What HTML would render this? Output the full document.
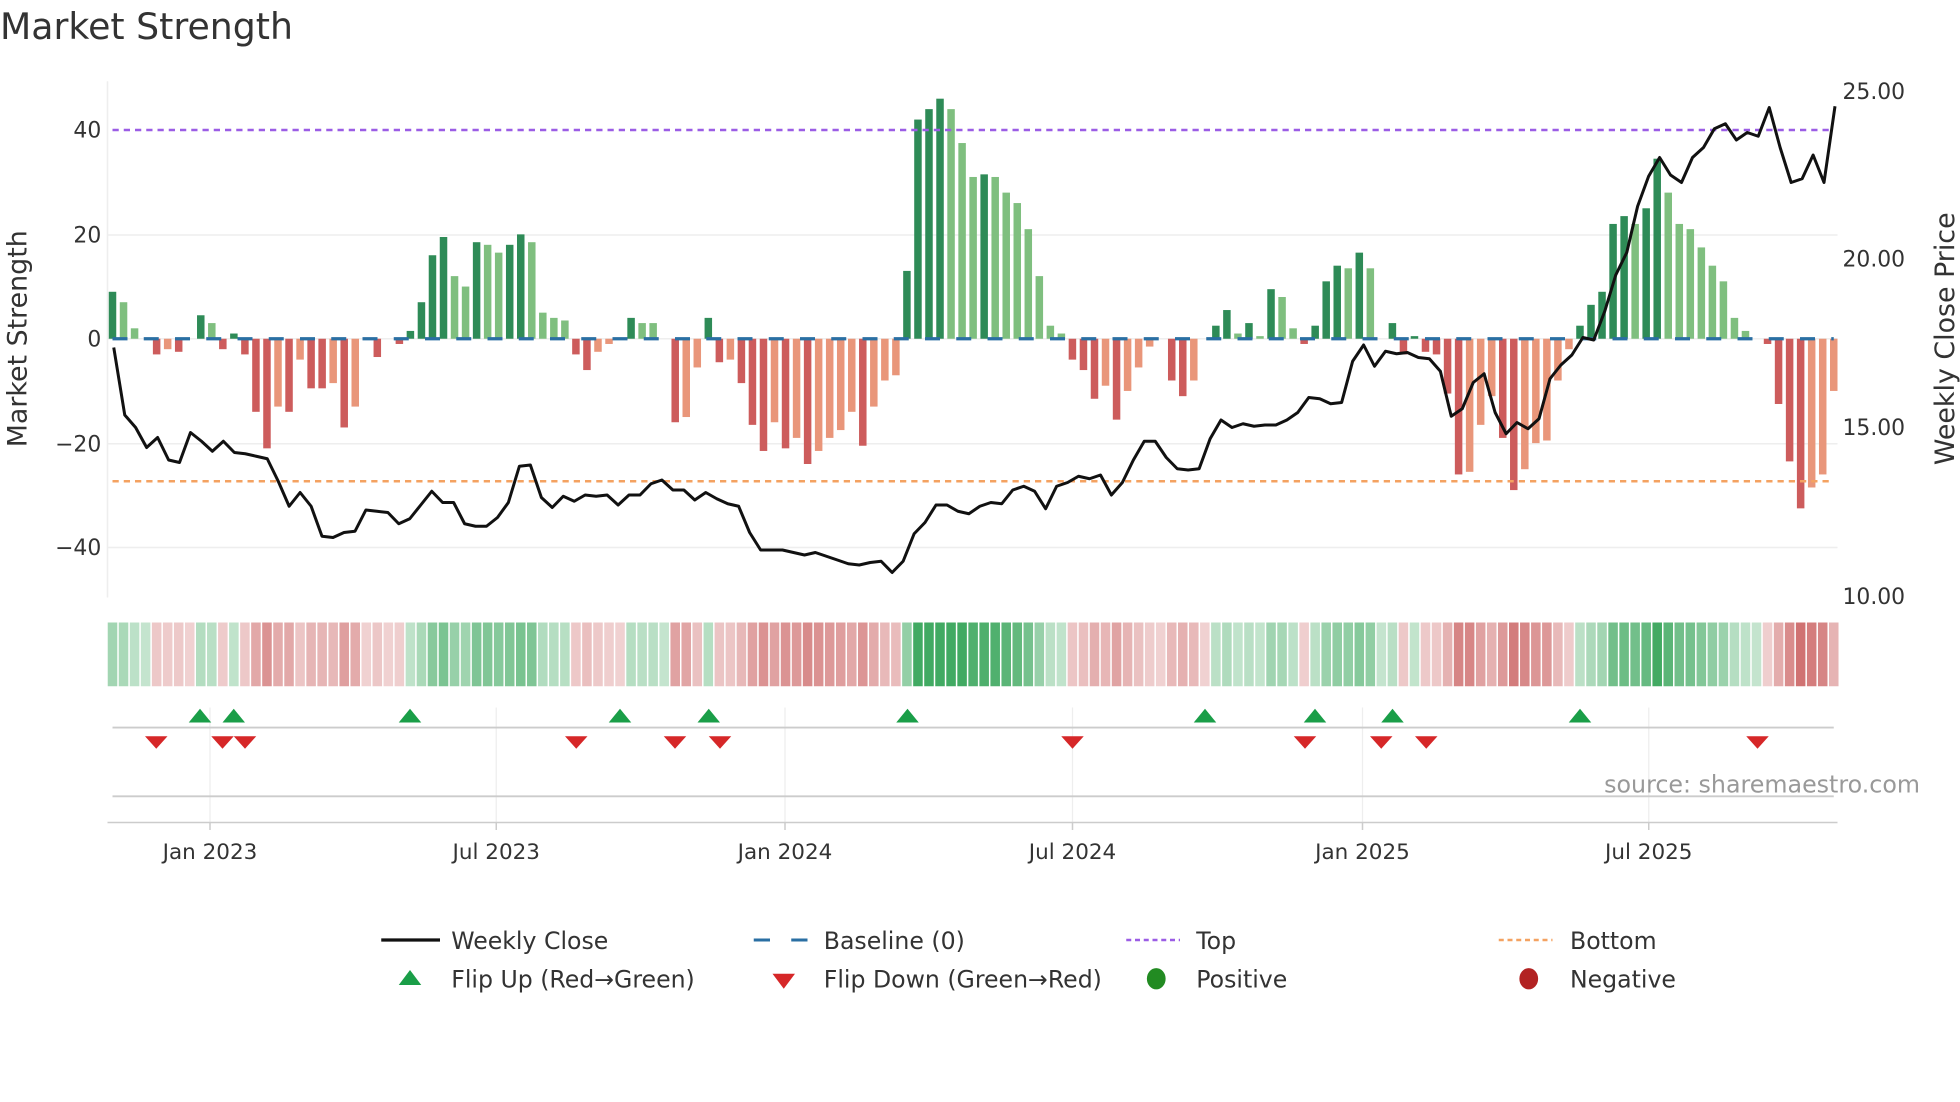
<!DOCTYPE html>
<html><head><meta charset="utf-8"><style>
html,body{margin:0;padding:0;background:#fff;}
svg{display:block;font-family:"DejaVu Sans","Liberation Sans",sans-serif;}
</style></head><body>
<svg id="s" width="1960" height="1102" viewBox="0 0 1568 881.6" xmlns="http://www.w3.org/2000/svg">
<rect width="1568" height="882" fill="#fff"/>
<text x="0" y="31" font-size="29" fill="#333">Market Strength</text>
<g stroke="#eeeeee" stroke-width="1.2">
<line x1="86" y1="188" x2="1470" y2="188"/>
<line x1="86" y1="355" x2="1470" y2="355"/>
<line x1="86" y1="438" x2="1470" y2="438"/>
<line x1="86" y1="271" x2="1470" y2="271"/>
<line x1="86" y1="65" x2="86" y2="478"/>
</g>
<g font-size="17.5" fill="#333" text-anchor="end">
<text x="81" y="110">40</text><text x="81" y="194">20</text><text x="81" y="277">0</text>
<text x="81" y="361">−20</text><text x="81" y="444">−40</text>
</g>
<g font-size="17.5" fill="#333">
<text x="1474" y="79">25.00</text><text x="1474" y="213">20.00</text>
<text x="1474" y="348">15.00</text><text x="1474" y="483">10.00</text>
</g>
<text transform="translate(21,271) rotate(-90)" font-size="21.5" fill="#333" text-anchor="middle">Market Strength</text>
<text transform="translate(1563,271) rotate(-90)" font-size="21.5" fill="#333" text-anchor="middle">Weekly Close Price</text>
<g id="bars"></g>
<line x1="90" y1="271" x2="1467" y2="271" stroke="#2a6fa3" stroke-width="2.6" stroke-dasharray="12 13"/>
<line x1="90" y1="104" x2="1467" y2="104" stroke="#9b5de5" stroke-width="2" stroke-dasharray="5 4"/>
<line x1="90" y1="385" x2="1467" y2="385" stroke="#f4a261" stroke-width="2" stroke-dasharray="5 4"/>
<polyline id="price" fill="none" stroke="#111" stroke-width="2.4" stroke-linejoin="round"/>
<g id="strip"></g>
<g stroke="#eee" stroke-width="1">
<line x1="168" y1="566" x2="168" y2="660"/><line x1="397" y1="566" x2="397" y2="660"/>
<line x1="628" y1="566" x2="628" y2="660"/><line x1="858" y1="566" x2="858" y2="660"/>
<line x1="1090" y1="566" x2="1090" y2="660"/><line x1="1319" y1="566" x2="1319" y2="660"/>
</g>
<line x1="90" y1="582" x2="1467" y2="582" stroke="#ccc" stroke-width="1.5"/>
<line x1="90" y1="637" x2="1467" y2="637" stroke="#ccc" stroke-width="1.5"/>
<g id="marks"></g>
<text x="1536" y="634" font-size="19" fill="#999" text-anchor="end">source: sharemaestro.com</text>
<line x1="86" y1="658" x2="1470" y2="658" stroke="#ccc" stroke-width="1.2"/>
<g stroke="#ccc" stroke-width="1.2">
<line x1="168" y1="658" x2="168" y2="664"/><line x1="397" y1="658" x2="397" y2="664"/>
<line x1="628" y1="658" x2="628" y2="664"/><line x1="858" y1="658" x2="858" y2="664"/>
<line x1="1090" y1="658" x2="1090" y2="664"/><line x1="1319" y1="658" x2="1319" y2="664"/>
</g>
<g font-size="17.2" fill="#333" text-anchor="middle">
<text x="168" y="687">Jan 2023</text><text x="397" y="687">Jul 2023</text>
<text x="628" y="687">Jan 2024</text><text x="858" y="687">Jul 2024</text>
<text x="1090" y="687">Jan 2025</text><text x="1319" y="687">Jul 2025</text>
</g>
<g font-size="18.9" fill="#333">
<line x1="305" y1="752" x2="352" y2="752" stroke="#111" stroke-width="2.6"/>
<text x="361" y="759">Weekly Close</text>
<line x1="603" y1="752" x2="616" y2="752" stroke="#2a6fa3" stroke-width="2.4"/>
<line x1="633" y1="752" x2="646" y2="752" stroke="#2a6fa3" stroke-width="2.4"/>
<text x="659" y="759">Baseline (0)</text>
<line x1="901" y1="752" x2="944" y2="752" stroke="#9b5de5" stroke-width="2" stroke-dasharray="4 3"/>
<text x="957" y="759">Top</text>
<line x1="1199" y1="752" x2="1242" y2="752" stroke="#f4a261" stroke-width="2" stroke-dasharray="4 3"/>
<text x="1256" y="759">Bottom</text>
<polygon points="319,788 337,788 328,776" fill="#1a9e48"/>
<text x="361" y="790">Flip Up (Red→Green)</text>
<polygon points="618,779 636,779 627,791" fill="#d62728"/>
<text x="659" y="790">Flip Down (Green→Red)</text>
<ellipse cx="925" cy="783" rx="7.5" ry="8.5" fill="#228b22"/>
<text x="957" y="790">Positive</text>
<ellipse cx="1223" cy="783" rx="7.5" ry="8.5" fill="#b22222"/>
<text x="1256" y="790">Negative</text>
</g>
</svg>
<script>
var NS="http://www.w3.org/2000/svg";
function el(t,a,p){var e=document.createElementNS(NS,t);for(var k in a)e.setAttribute(k,a[k]);p.appendChild(e);return e;}
var B=[[9,1],[7,0],[2,0],[0,0],[-3,1],[-2,0],[-2.5,1],[0,0],[4.5,1],[3,0],[-2,1],[1,1],[-3,1],[-14,1],[-21,1],[-13,0],[-14,1],[-4,0],[-9.5,1],[-9.5,1],[-8.5,0],[-17,1],[-13,0],[0,0],[-3.5,1],[0,0],[-1,1],[1.5,1],[7,1],[16,1],[19.5,1],[12,0],[10,0],[18.5,1],[18,0],[16.5,0],[18,1],[20,1],[18.5,0],[5,0],[4,0],[3.5,0],[-3,1],[-6,1],[-2.5,0],[-1,0],[0,0],[4,1],[3,0],[3,0],[0,0],[-16,1],[-15,0],[-5.5,0],[4,1],[-4.5,1],[-4,0],[-8.5,1],[-16.5,1],[-21.5,1],[-16,0],[-21,1],[-19,0],[-24,1],[-21.5,0],[-19,0],[-17.5,0],[-14,0],[-20.5,1],[-13,0],[-8,0],[-7,0],[13,1],[42,1],[44,1],[46,1],[44,0],[37.5,0],[31,0],[31.5,1],[31,0],[28,0],[26,0],[21,0],[12,0],[2.5,0],[1,0],[-4,1],[-6,1],[-11.5,1],[-9,0],[-15.5,1],[-10,0],[-5.5,0],[-1.5,0],[0,0],[-8,1],[-11,1],[-8,0],[0,0],[2.5,1],[5.5,1],[1,0],[3,1],[0.5,0],[9.5,1],[8,0],[2,0],[-1,1],[2.5,1],[11,1],[14,1],[13.5,0],[16.5,1],[13.5,0],[0,0],[3,1],[-3,1],[0.5,1],[-2.5,1],[-3,1],[-10.5,1],[-26,1],[-25.5,0],[-16.5,0],[-11,0],[-19,1],[-29,1],[-25,0],[-20,0],[-19.5,0],[-8,0],[-2,0],[2.5,1],[6.5,1],[9,1],[22,1],[23.5,1],[22,0],[25,1],[34.5,1],[28,0],[22,0],[21,0],[17.5,0],[14,0],[11,0],[4,0],[1.5,0],[0,0],[-1,1],[-12.5,1],[-23.5,1],[-32.5,1],[-28.5,0],[-26,0],[-10,0]];
var n=B.length, x0=90, x1=1467, dx=(x1-x0)/(n-1);
var bars=document.getElementById('bars'), strip=document.getElementById('strip');
var last=1;
function mix(c,t){var r=Math.round(255+(c[0]-255)*t),g=Math.round(255+(c[1]-255)*t),b=Math.round(255+(c[2]-255)*t);return "rgb("+r+","+g+","+b+")";}
for(var i=0;i<n;i++){
 var v=B[i][0], d=B[i][1], x=x0+i*dx;
 if(v!==0){
  var h=Math.abs(v)*4.175, y=v>0?271-h:271;
  var col=v>0?(d?"#2e8b57":"#7fbf7f"):(d?"#cd5c5c":"#e9967a");
  el('rect',{x:x-3,y:y,width:6,height:h,fill:col},bars);
  last=v>0?1:-1;
 }
 var a=Math.abs(v), t=0.28+0.62*Math.min(a/35,1);
 var sc=last>0?mix([44,160,80],t):mix([200,90,90],t);
 el('rect',{x:x-dx/2+0.6,y:498,width:dx-1.2,height:51,fill:sc},strip);
}
var P=[278,332,342,358,350,368,370,346,353,361,353,362,363,365,367,385,405,394,405,429,430,426,425,408,409,410,419,415,404,393,402,402,419,421,421,414,402,373,372,398,406,397,401,396,397,396,404,396,396,387,384,392,392,400,394,399,403,405,426,440,440,440,442,444,442,445,448,451,452,450,449,458,449,427,418,404,404,409,411,405,402,403,392,389,393,407,389,386,381,383,380,396,386,368,353,353,366,375,376,375,351,336,342,339,341,340,340,336,330,318,319,323,322,289,276,293,281,283,282,286,287,297,333,327,306,299,330,347,338,343,335,303,292,284,270,272,249,220,202,165,141,126,140,146,126,118,103,99,112,106,109,86,118,146,143,124,146,85];
var pts=[],m=P.length,pdx=(1468-91)/(m-1);
for(var j=0;j<m;j++)pts.push((91+j*pdx).toFixed(1)+","+P[j]);
document.getElementById('price').setAttribute('points',pts.join(' '));
var mk=document.getElementById('marks');
[160,187,328,496,567,726,964,1052,1114,1264].forEach(function(x){el('polygon',{points:(x-9)+",578 "+(x+9)+",578 "+x+",567",fill:"#1a9e48"},mk);});
[125,178,196,461,540,576,858,1044,1105,1141,1406].forEach(function(x){el('polygon',{points:(x-9)+",589 "+(x+9)+",589 "+x+",599",fill:"#d62728"},mk);});
</script>
</body></html>
